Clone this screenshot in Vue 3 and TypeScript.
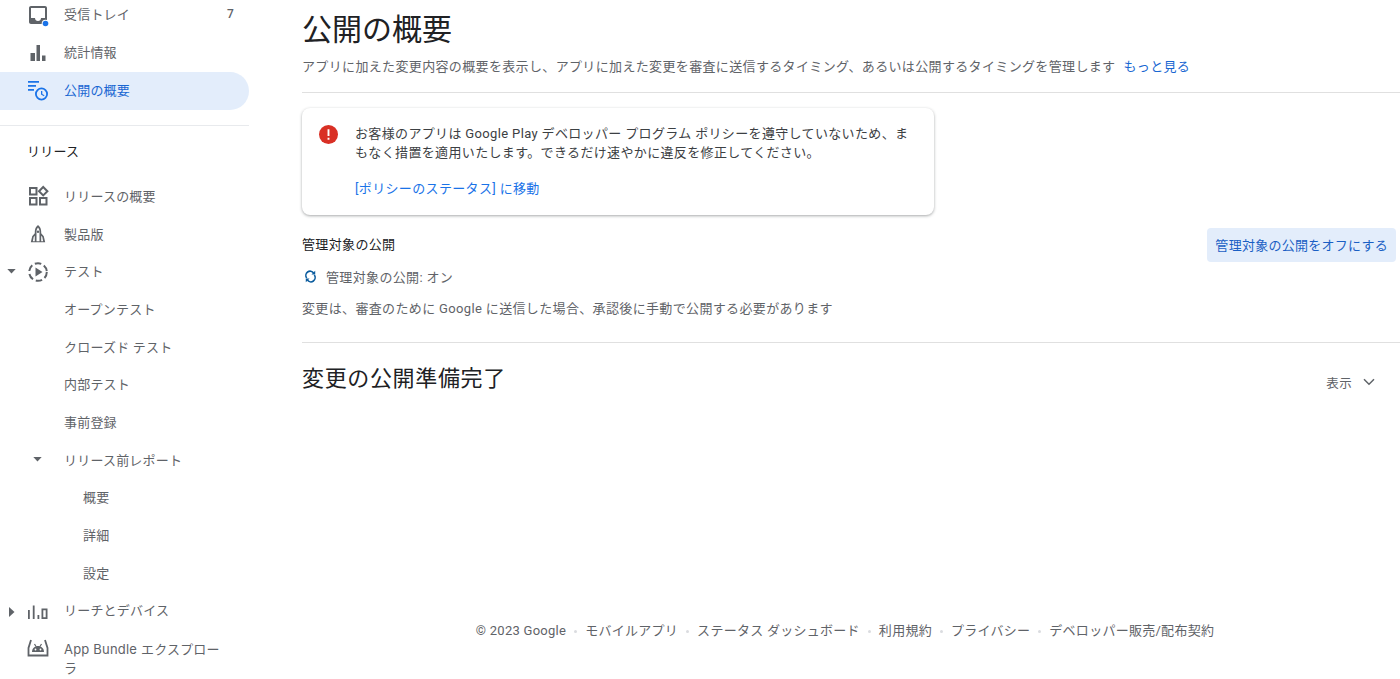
<script setup lang="ts">
interface NavItem { label: string; icon?: string; caret?: 'down' | 'right'; level?: number; badge?: string; active?: boolean; caretIndented?: boolean }
const top: NavItem[] = [
  { label: '受信トレイ', icon: 'inbox', badge: '7' },
  { label: '統計情報', icon: 'bars' },
  { label: '公開の概要', icon: 'publish', active: true },
]
const rel: NavItem[] = [
  { label: 'リリースの概要', icon: 'dash' },
  { label: '製品版', icon: 'rocket' },
  { label: 'テスト', icon: 'test', caret: 'down' },
  { label: 'オープンテスト', level: 1 },
  { label: 'クローズド テスト', level: 1 },
  { label: '内部テスト', level: 1 },
  { label: '事前登録', level: 1 },
  { label: 'リリース前レポート', level: 1, caret: 'down', caretIndented: true },
  { label: '概要', level: 2 },
  { label: '詳細', level: 2 },
  { label: '設定', level: 2 },
  { label: 'リーチとデバイス', icon: 'reach', caret: 'right' },
]
const footer = ['モバイルアプリ', 'ステータス ダッシュボード', '利用規約', 'プライバシー', 'デベロッパー販売/配布契約']
</script>

<template>
  <div class="page">
    <aside class="side">
      <template v-for="(group, gi) in [top, rel]" :key="gi">
        <template v-if="gi === 1">
          <div class="rule"></div>
          <div class="section">リリース</div>
        </template>
        <div
          v-for="it in group"
          :key="it.label"
          class="row"
          :class="{ active: it.active, l1: it.level === 1, l2: it.level === 2 }"
        >
          <svg v-if="it.caret === 'down'" class="caret" :class="{ inset: it.caretIndented }" viewBox="0 0 10 6" width="9" height="5"><path d="M0 0h10L5 5.500z" fill="#5f6368" /></svg>
          <svg v-if="it.caret === 'right'" class="caret right" viewBox="0 0 6 10" width="6" height="10"><path d="M0 0v10l5.500-5z" fill="#5f6368" /></svg>
          <svg v-if="it.icon" class="ico" viewBox="0 0 24 24" width="24" height="24">
            <g v-if="it.icon === 'inbox'">
              <path fill-rule="evenodd" fill="#5f6368" d="M5 3h14c1.100 0 2 .9 2 2v14c0 1.100-.9 2-2 2H5c-1.100 0-2-.9-2-2V5c0-1.100.9-2 2-2zm0 2v10h4c0 1.700 1.300 3 3 3s3-1.300 3-3h4V5H5z" />
              <circle cx="19.500" cy="20.500" r="3.800" fill="#fff" />
              <circle cx="19.500" cy="20.500" r="2.800" fill="#1a73e8" />
            </g>
            <path v-else-if="it.icon === 'bars'" fill="#5f6368" d="M4.500 12H9v8H4.500zM10.500 4H14v16h-3.500zM16 14.500h3.500V20H16z" />
            <g v-else-if="it.icon === 'publish'" fill="#1a73e8">
              <path d="M2 3h11v1.800H2zM2 7h8v1.800H2zM2 11h6v1.800H2z" />
              <path fill-rule="evenodd" d="M15.500 9.500a6.500 6.500 0 1 1 0 13 6.500 6.500 0 0 1 0-13zm0 1.800a4.700 4.700 0 1 0 0 9.400 4.700 4.700 0 0 0 0-9.400z" />
              <path d="M15 13h1.300v3l2.200 1.300-.6 1-2.900-1.700z" />
            </g>
            <g v-else-if="it.icon === 'dash'" fill="none" stroke="#5f6368" stroke-width="2">
              <path d="M4 4h6.500v6.500H4zM4 14h6.500v6.500H4zM14 14h6.500v6.500H14z" />
              <path d="M17.200 3l4.200 4.200-4.200 4.200L13 7.200z" />
            </g>
            <g v-else-if="it.icon === 'rocket'" fill="#5f6368">
              <path fill-rule="evenodd" d="M12 3c2.300 1.800 3.200 4.200 3.200 6.800v1.400l2.600 3 1.400 6H4.800l1.400-6 2.600-3V9.800C8.800 7.200 9.700 4.800 12 3zm0 2.500c-1 1.200-1.500 2.700-1.500 4.300v9.400h3V9.800c0-1.600-.5-3.100-1.500-4.300zM8.800 13.700l-1.100 1.300-.8 4.200h1.900zm6.400 0v5.500h1.900l-.8-4.200z" />
              <circle cx="12" cy="9.800" r="1.200" />
            </g>
            <g v-else-if="it.icon === 'test'">
              <circle cx="12" cy="12" r="8.800" fill="none" stroke="#5f6368" stroke-width="2" stroke-dasharray="6.500 3" />
              <path d="M9.500 7.500v9l7-4.500z" fill="#5f6368" />
            </g>
            <g v-else-if="it.icon === 'reach'" fill="#5f6368">
              <path d="M2 11h1.800v9H2zM6.800 6.500h1.800V20H6.800zM11.500 16h1.800v4h-1.800z" />
              <path fill-rule="evenodd" d="M15.500 9.500h6V20h-6zm1.800 1.800v6.900h2.400v-6.900z" />
            </g>
          </svg>
          <span class="label">{{ it.label }}</span>
          <span v-if="it.badge" class="badge">{{ it.badge }}</span>
        </div>
      </template>
      <div class="row bundle">
        <svg class="ico" viewBox="0 0 24 24" width="24" height="24">
          <path fill="none" stroke="#5f6368" stroke-width="1.800" d="M5 5L2.500 13v7.500h19V13L19 5" />
          <path fill="#5f6368" d="M6 17c0-3.500 2.600-6 6-6s6 2.500 6 6z" />
          <path stroke="#5f6368" stroke-width="1.200" d="M8.500 9l1.500 2.500M15.500 9L14 11.500" />
          <circle cx="9.500" cy="14.500" r=".9" fill="#fff" />
          <circle cx="14.500" cy="14.500" r=".9" fill="#fff" />
        </svg>
        <span class="label">App Bundle エクスプローラ</span>
      </div>
    </aside>

    <main class="main">
      <h1 class="title">公開の概要</h1>
      <p class="sub">アプリに加えた変更内容の概要を表示し、アプリに加えた変更を審査に送信するタイミング、あるいは公開するタイミングを管理します<a class="more">もっと見る</a></p>
      <div class="line first"></div>

      <section class="card">
        <svg class="err" viewBox="0 0 20 20" width="19" height="19">
          <circle cx="10" cy="10" r="10" fill="#d93025" />
          <path fill="#fff" d="M9 4.500h2v7H9zM9 13.500h2v2H9z" />
        </svg>
        <div class="card-body">
          <p class="msg">お客様のアプリは Google Play デベロッパー プログラム ポリシーを遵守していないため、まもなく措置を適用いたします。できるだけ速やかに違反を修正してください。</p>
          <a class="go">[ポリシーのステータス] に移動</a>
        </div>
      </section>

      <div class="managed">
        <div class="managed-text">
          <div class="m-title">管理対象の公開</div>
          <div class="m-status">
            <svg viewBox="0 0 16 16" width="13" height="13">
              <g fill="none" stroke="#0b5c9e" stroke-width="2">
                <path d="M11.800 3.600A5 5 0 0 0 3.300 9.800" />
                <path d="M4.200 12.400A5 5 0 0 0 12.700 6.200" />
              </g>
              <path fill="#0b5c9e" d="M9.200 5.500h4.600V1zM6.800 10.500H2.200V15z" />
            </svg>
            <span>管理対象の公開: オン</span>
          </div>
        </div>
        <button class="off">管理対象の公開をオフにする</button>
      </div>
      <p class="note">変更は、審査のために Google に送信した場合、承認後に手動で公開する必要があります</p>
      <div class="line second"></div>

      <div class="ready">
        <h2>変更の公開準備完了</h2>
        <span class="show">表示
          <svg viewBox="0 0 12 8" width="12" height="8"><path d="M1 1.300l5 5 5-5" fill="none" stroke="#5f6368" stroke-width="1.500" /></svg>
        </span>
      </div>

      <footer class="foot">
        <span>© 2023 Google</span>
        <template v-for="f in footer" :key="f"><i class="dot"></i><span>{{ f }}</span></template>
      </footer>
    </main>
  </div>
</template>

<style>
html, body { margin: 0; overflow: hidden; background: #fff; }
</style>

<style scoped>
.page {
  width: 1400px; height: 679px; overflow: hidden; display: flex;
  font-family: Roboto, "Noto Sans CJK JP", sans-serif; color: #3c4043;
  font-size: 13px; letter-spacing: .2px;
}
.side { width: 249px; flex: none; margin-top: -3.400px; margin-right: 53px; }
.row { position: relative; box-sizing: border-box; height: 37.700px; padding: 0 0 3px 26px; display: flex; align-items: center; color: #5f6368; }
.row.active { background: #e3edfb; color: #1967d2; border-radius: 0 19px 19px 0; height: 38px; }
.ico { flex: none; margin: 2px 14px 0 0; width: 24px; height: 24px; }
.label { white-space: nowrap; }
.l1 { padding-left: 64px; }
.l2 { padding-left: 83px; }
.caret { position: absolute; left: 7px; top: 15.500px; }
.caret.inset { left: 33px; }
.caret.right { left: 9px; top: 14px; }
.badge { position: absolute; right: 15px; font-size: 12px; font-weight: 500; color: #5f6368; }
.rule { height: 1px; background: #e8eaed; margin-top: 15px; }
.section { box-sizing: border-box; height: 52px; padding: 0 0 3px 27px; display: flex; align-items: center; color: #202124; }
.bundle { align-items: flex-start; height: 38px; padding-bottom: 0; }
.bundle .ico { margin-top: 5px; }
.bundle .label { width: 160px; white-space: normal; line-height: 19px; padding-top: 10px; font-family: Inter, "Noto Sans CJK JP", sans-serif; }

.main { flex: 1; min-width: 0; position: relative; letter-spacing: .35px; }
.title { margin: 8px 0 0; font-size: 30px; font-weight: 400; line-height: 44px; color: #202124; letter-spacing: 0; }
.sub { margin: 3px 0 0; line-height: 24px; color: #5f6368; white-space: nowrap; }
.more { color: #1967d2; margin-left: 8px; }
.line { height: 1px; background: #e0e0e0; }
.first { margin-top: 13px; }
.card {
  width: 632px; height: 107px; box-sizing: border-box; margin-top: 15px; padding: 15.500px 16px 0 17px;
  display: flex; border-radius: 8px; box-shadow: 0 1px 3px rgba(60,64,67,.45);
}
.err { flex: none; margin: 1px 17px 0 0; }
.msg { margin: 0; line-height: 19.500px; color: #3c4043; }
.go { display: block; margin-top: 16px; color: #1a73e8; line-height: 20px; }
.managed { display: flex; justify-content: space-between; margin: 14px 4px 0 0; }
.m-title { color: #202124; line-height: 32px; }
.m-status { display: flex; align-items: center; height: 30px; color: #5f6368; }
.m-status svg { flex: none; margin: 1px 9px 0 2px; }
.off {
  height: 34px; margin-top: -1px; padding: 0 8px 2px; border: 0; border-radius: 4px; background: #e3edfb; color: #1a5fc4;
  font: inherit; letter-spacing: .27px;
}
.note { margin: 2px 0 0; line-height: 32px; color: #5f6368; }
.second { margin-top: 17px; }
.ready { display: flex; justify-content: space-between; align-items: center; height: 72px; padding-right: 25px; }
.ready h2 { margin: 0; padding-bottom: 6px; font-size: 22px; font-weight: 400; color: #202124; letter-spacing: .65px; }
.show { display: flex; align-items: center; gap: 11px; color: #5f6368; font-size: 12.500px; padding-top: 6px; }
.foot { display: flex; align-items: center; justify-content: center; margin: 206px 0 0 -12px; color: #5f6368; font-size: 13px; line-height: 20px; letter-spacing: .27px; }
.dot { width: 3px; height: 3px; border-radius: 50%; background: #dadce0; margin: 0 8px; }
</style>
